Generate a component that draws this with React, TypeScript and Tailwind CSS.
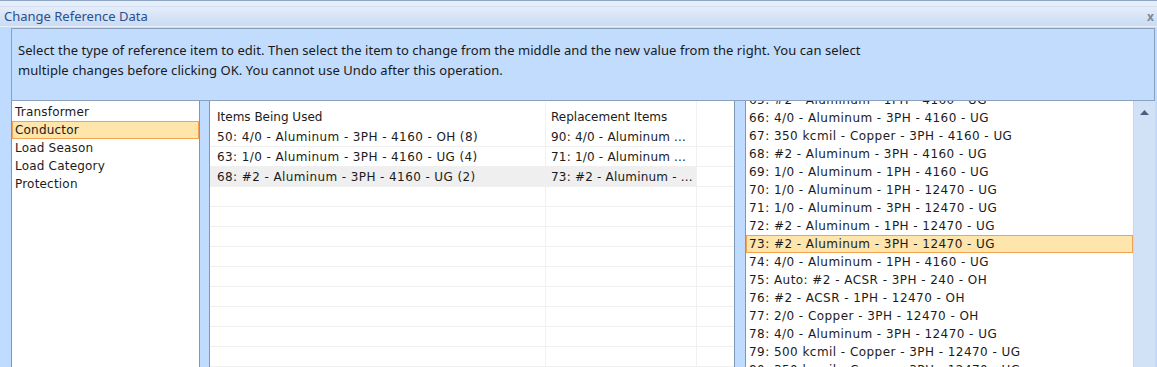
import React from "react";

const categories = ["Transformer", "Conductor", "Load Season", "Load Category", "Protection"];

const usedRows = [
  { used: "50: 4/0 - Aluminum - 3PH - 4160 - OH (8)", repl: "90: 4/0 - Aluminum ..." },
  { used: "63: 1/0 - Aluminum - 3PH - 4160 - UG (4)", repl: "71: 1/0 - Aluminum ..." },
  { used: "68: #2 - Aluminum - 3PH - 4160 - UG (2)", repl: "73: #2 - Aluminum - ..." },
];

const choices = [
  "65: #2 - Aluminum - 1PH - 4160 - UG",
  "66: 4/0 - Aluminum - 3PH - 4160 - UG",
  "67: 350 kcmil - Copper - 3PH - 4160 - UG",
  "68: #2 - Aluminum - 3PH - 4160 - UG",
  "69: 1/0 - Aluminum - 1PH - 4160 - UG",
  "70: 1/0 - Aluminum - 1PH - 12470 - UG",
  "71: 1/0 - Aluminum - 3PH - 12470 - UG",
  "72: #2 - Aluminum - 1PH - 12470 - UG",
  "73: #2 - Aluminum - 3PH - 12470 - UG",
  "74: 4/0 - Aluminum - 1PH - 4160 - UG",
  "75: Auto: #2 - ACSR - 3PH - 240 - OH",
  "76: #2 - ACSR - 1PH - 12470 - OH",
  "77: 2/0 - Copper - 3PH - 12470 - OH",
  "78: 4/0 - Aluminum - 3PH - 12470 - UG",
  "79: 500 kcmil - Copper - 3PH - 12470 - UG",
  "80: 350 kcmil - Copper - 3PH - 12470 - UG",
];

export default function App() {
  const activeCategory = "Conductor";
  const activeChoice = "73: #2 - Aluminum - 3PH - 12470 - UG";

  return (
    <div className="w-[1157px] h-[367px] overflow-hidden bg-[#bfdbff] flex flex-col font-['Noto_Sans',sans-serif] text-[12px] text-[#1b1b1b]">
      {/* Window chrome */}
      <div className="h-[1px] bg-[#8ea6c6] shrink-0" />
      <div className="h-[6px] bg-[#e6eefa] border-b border-[#d5e1f2] shrink-0" />
      <div className="h-[20px] shrink-0 flex items-center justify-between bg-gradient-to-b from-[#e4edfa] to-[#c9dbf3] border-b border-[#e8f0fb] pl-[4px] pr-[3px]">
        <span className="text-[13px] text-[#2b4f8c] leading-none">Change Reference Data</span>
        <span className="text-[12px] font-bold text-[#7d8a9c] leading-none">x</span>
      </div>

      {/* Body */}
      <div className="flex-1 min-h-0 flex flex-col pl-[11px] pr-[2px] pt-[1px]">
        {/* Instructions */}
        <div className="h-[73px] shrink-0 border border-[#8aa0bd] bg-[#c1dcfd] px-[6px] pt-[11px] leading-[20px] text-[13px] tracking-[0.06px] text-[#1a1a1a]">
          <p>
            Select the type of reference item to edit. Then select the item to change from the middle and the new value from the right. You can select
            <br />
            multiple changes before clicking OK. You cannot use Undo after this operation.
          </p>
        </div>

        <div className="flex-1 min-h-0 flex font-['DejaVu_Sans',sans-serif]">
          {/* Categories */}
          <div className="w-[189px] shrink-0 bg-white border-x border-[#8096b6] pt-[2px] tracking-[0.2px]">
            {categories.map((c) => (
              <div
                key={c}
                className={`h-[18px] leading-[16px] pl-[2px] border ${
                  c === activeCategory ? "bg-[#fde5ab] border-[#f6a14e]" : "border-transparent"
                }`}
              >
                {c}
              </div>
            ))}
          </div>

          {/* Items grid */}
          <div className="ml-[9px] w-[526px] shrink-0 bg-white border-x border-[#8096b6] overflow-hidden">
            <div className="h-[26px] flex">
              <div className="w-[336px] pl-[7px] flex items-center pt-[5px] border-r border-[#f2f2f2]">Items Being Used</div>
              <div className="w-[151px] pl-[5px] flex items-center pt-[5px] border-r border-[#f2f2f2]">Replacement Items</div>
              <div className="flex-1" />
            </div>
            {usedRows.map((r, i) => (
              <div key={r.used} className="h-[20px] flex border-b border-[#f0f0f0]">
                <div className={`w-[336px] pl-[7px] pt-[2px] leading-[17px] tracking-[0.4px] whitespace-nowrap border-r border-[#f0f0f0] ${i === 2 ? "bg-[#efefef]" : ""}`}>
                  {r.used}
                </div>
                <div className={`w-[151px] pl-[5px] pt-[2px] leading-[17px] tracking-[0.2px] whitespace-nowrap overflow-hidden border-r border-[#f0f0f0] ${i === 2 ? "bg-[#efefef]" : ""}`}>
                  {r.repl}
                </div>
                <div className="flex-1" />
              </div>
            ))}
            {Array.from({ length: 10 }).map((_, i) => (
              <div key={i} className="h-[20px] flex border-b border-[#f0f0f0]">
                <div className="w-[336px] border-r border-[#f0f0f0]" />
                <div className="w-[151px] border-r border-[#f0f0f0]" />
                <div className="flex-1" />
              </div>
            ))}
          </div>

          {/* Replacement choices */}
          <div className="ml-[10px] flex-1 min-w-0 flex border-l border-[#8096b6] bg-white">
            <div className="flex-1 min-w-0 overflow-hidden">
              <div className="-mt-[10px] tracking-[0.45px]">
                {choices.map((c) => (
                  <div
                    key={c}
                    className={`h-[18px] leading-[17px] pl-[2px] border whitespace-nowrap ${
                      c === activeChoice ? "bg-[#fde5ab] border-[#f6a14e]" : "border-transparent"
                    }`}
                  >
                    {c}
                  </div>
                ))}
              </div>
            </div>
            <div className="w-[22px] shrink-0 bg-[#d2e2f6] border-l border-[#c5d7ef] flex justify-center pt-[9px]">
              <svg width="9" height="5" viewBox="0 0 9 5">
                <path d="M4.5 0 L9 5 L0 5 Z" fill="#4c5f7e" />
              </svg>
            </div>
          </div>
        </div>
      </div>
    </div>
  );
}
